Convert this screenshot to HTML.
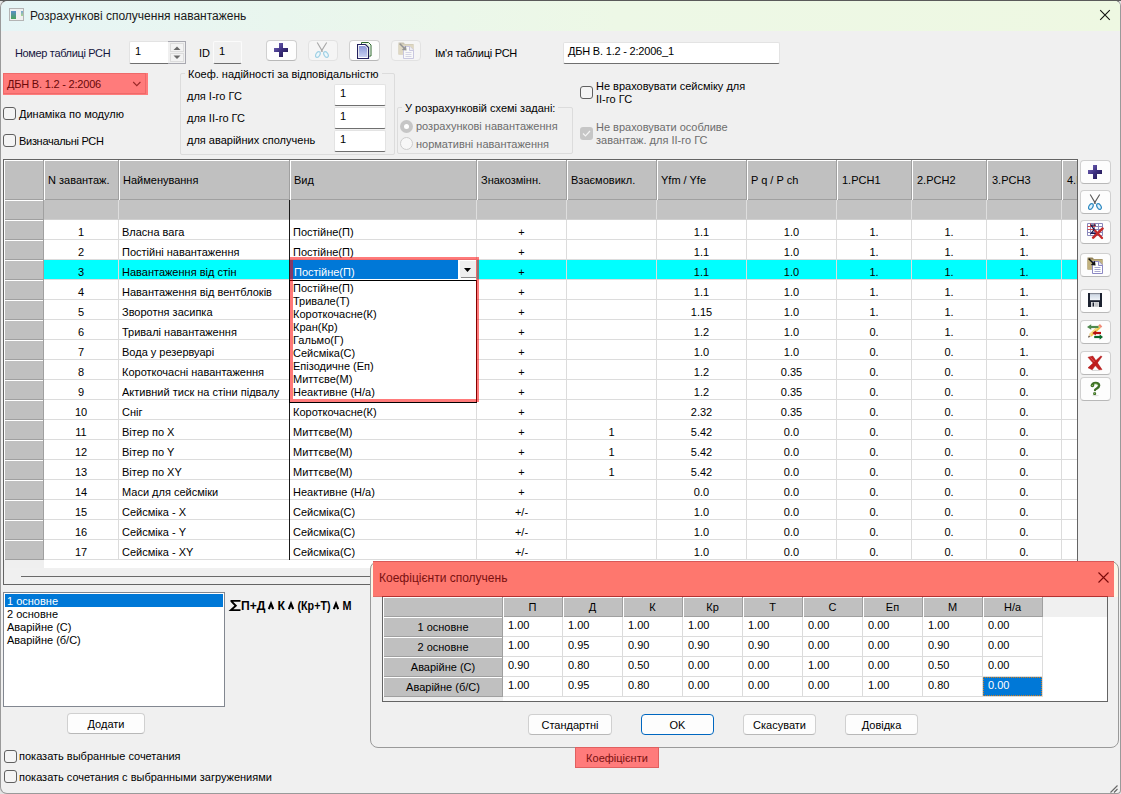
<!DOCTYPE html><html><head><meta charset="utf-8"><style>
*{margin:0;padding:0;box-sizing:border-box}
html,body{width:1121px;height:794px;overflow:hidden;background:#e4e4e4;font-family:"Liberation Sans",sans-serif}
.a{position:absolute}
.t{position:absolute;font-size:11px;line-height:13px;white-space:nowrap;color:#000}
.g{color:#6d6d6d}
.w{color:#fff}
.edit{position:absolute;background:#fff;border:1px solid #e3e3e3;border-bottom:1px solid #6f6f6f;border-radius:2px}
.btn{position:absolute;background:#fdfdfd;border:1px solid #d0d0d0;border-bottom-color:#b8b8b8;border-radius:4px}
.btnd{position:absolute;background:#f5f5f5;border:1px solid #e2e2e2;border-radius:4px}
.cb{position:absolute;width:13px;height:13px;border:1px solid #606060;border-radius:3px;background:#f4f4f4}
</style></head><body>
<svg width="0" height="0" style="position:absolute"><defs>
<linearGradient id="gp" x1="0" y1="0" x2="1" y2="1"><stop offset="0" stop-color="#7a6cc0"/><stop offset="0.5" stop-color="#3d3080"/><stop offset="1" stop-color="#1c1448"/></linearGradient>
<linearGradient id="gd" x1="0" y1="0" x2="0" y2="1"><stop offset="0" stop-color="#8a98d8"/><stop offset="1" stop-color="#c8d0f0"/></linearGradient>
<linearGradient id="gf" x1="0" y1="0" x2="0" y2="1"><stop offset="0" stop-color="#c9d4e2"/><stop offset="1" stop-color="#f0f4f8"/></linearGradient>
</defs></svg>
<div class="a" style="left:0;top:0;width:1121px;height:794px;background:#f0f0f0;border:1px solid #9a9a9a;border-top-color:#5a5a5a;border-radius:7px 6px 4px 7px;overflow:hidden">
</div>
<div class="a" style="left:0px;top:0px;width:1121px;height:1px;background:#5a5a5a"></div>
<div class="a" style="left:1px;top:1px;width:1119px;height:30px;background:linear-gradient(90deg,#e6f5f6 0%,#e9f6ee 25%,#edf8e6 55%,#eef8e2 100%);border-radius:7px 5px 0 0"></div>
<div class="a" style="left:9px;top:8px;width:15px;height:13px;border:1px solid #b4b4b4;background:#f0f0f0"></div>
<div class="a" style="left:11px;top:11px;width:5px;height:8px;background:linear-gradient(#5b8fc8,#4aa35a)"></div>
<div class="a" style="left:21px;top:11px;width:2px;height:5px;background:linear-gradient(#7aa4d4,#a8d890)"></div>
<div class="t" style="left:30px;top:9px;font-size:12px;line-height:15px;color:#1a1a1a">Розрахункові сполучення навантажень</div>
<svg class="a" style="left:1099px;top:9px" width="13" height="13"><path d="M1.2 1.2L10.8 10.8M10.8 1.2L1.2 10.8" stroke="#111" stroke-width="1.1"/></svg>
<div class="t " style="left:15px;top:47px;color:#161640;letter-spacing:-0.35px">Номер таблиці РСН</div>
<div class="edit" style="left:129px;top:41px;width:40px;height:23px;border-right:none;border-radius:2px 0 0 2px"></div>
<div class="t " style="left:135px;top:45px;">1</div>
<div class="a" style="left:168px;top:41px;width:18px;height:23px;border:1px solid #a8a8b0;border-left:none;background:#f0f0f0"></div>
<div class="a" style="left:170px;top:43px;width:14px;height:9px;border:1px solid #dcdcdc;background:#f3f3f3"></div>
<div class="a" style="left:170px;top:53px;width:14px;height:9px;border:1px solid #dcdcdc;background:#f3f3f3"></div>
<svg class="a" style="left:172px;top:45px" width="10" height="16"><path d="M1.5 5L5 1.5L8.5 5Z" fill="#6a6a6a"/><path d="M1.5 10.5L5 14L8.5 10.5Z" fill="#6a6a6a"/></svg>
<div class="t " style="left:199px;top:47px;">ID</div>
<div class="edit" style="left:213px;top:41px;width:29px;height:23px;background:#f0f0f0;border:1px solid #fbfbfb;border-bottom-color:#6f6f6f"></div>
<div class="t " style="left:219px;top:45px;">1</div>
<div class="btn" style="left:266px;top:40px;width:31px;height:21px"></div>
<svg class="a" style="left:274px;top:43px" width="14" height="14" viewBox="0 0 14 14"><path d="M5 0h4v5h5v4h-5v5h-4v-5h-5v-4h5z" fill="url(#gp)"/></svg>
<div class="btnd" style="left:308px;top:40px;width:30px;height:21px"></div>
<svg class="a" style="left:315px;top:42px" width="15" height="17" viewBox="0 0 15 17"><path d="M2.2 0.5L7.6 9.6M11.7 0.5L6.1 9.6" stroke="#a8a8a8" stroke-width="1.1" fill="none"/><ellipse cx="2.9" cy="12.5" rx="1.9" ry="3.1" transform="rotate(30 2.9 12.5)" stroke="#9fd0e4" stroke-width="1.2" fill="#eef8fc"/><ellipse cx="11" cy="12.5" rx="1.9" ry="3.1" transform="rotate(-30 11 12.5)" stroke="#9fd0e4" stroke-width="1.2" fill="#eef8fc"/></svg>
<div class="btn" style="left:349px;top:40px;width:31px;height:21px"></div>
<svg class="a" style="left:357px;top:42px" width="17" height="17" viewBox="0 0 17 17"><path d="M4.5 0.5h7l2.5 2.5v11h-9.5z" fill="#fff" stroke="#2e6a2e"/><path d="M5.5 1.5h5.5l2 2v10h-7.5z" fill="#dff5d8"/><path d="M0.5 2.5h8l3 3v11h-11z" fill="#fff" stroke="#22205e" stroke-width="1.2"/><path d="M2 4h6l2 2v9h-8z" fill="url(#gd)"/></svg>
<div class="btnd" style="left:391px;top:40px;width:30px;height:21px"></div>
<svg class="a" style="left:398px;top:42px" width="17" height="17" viewBox="0 0 17 17"><g opacity="0.42"><path d="M0.5 0.5h5l1.5 1.5h8.5v10.5h-15z" fill="#8f8058"/><path d="M0.5 2.5h15v10h-15z" fill="#c2b27e"/><path d="M5.5 4.5h6.5l3.5 3.5v8.5h-10z" fill="#fff" stroke="#8c88c4"/><path d="M11.5 4.5v4h4" fill="#e8e8f4" stroke="#8c88c4"/><path d="M7.5 10.5h6M7.5 12.5h6M7.5 14.5h6" stroke="#a8a8d0"/><path d="M1.8 1.8L7 7" stroke="#111" stroke-width="1.5"/><path d="M8.6 8.6L3.8 7.9L7.9 3.8z" fill="#111"/></g></svg>
<div class="t " style="left:435px;top:47px;letter-spacing:-0.25px">Ім'я таблиці РСН</div>
<div class="edit" style="left:563px;top:42px;width:217px;height:22px"></div>
<div class="t " style="left:568px;top:45px;letter-spacing:-0.2px">ДБН В. 1.2 - 2:2006_1</div>
<div class="a" style="left:3px;top:73px;width:145px;height:22px;background:#ff7b7b"></div>
<div class="a" style="left:3px;top:73px;width:143px;height:21px;border:1px solid #ee6a6a"></div>
<div class="t " style="left:7px;top:78px;color:#6a0808;letter-spacing:-0.2px">ДБН В. 1.2 - 2:2006</div>
<svg class="a" style="left:132px;top:80px" width="10" height="7"><path d="M1.2 2L4.8 5.6L8.4 2" stroke="#9a2828" stroke-width="1.1" fill="none"/></svg>
<div class="cb" style="left:3px;top:107px"></div>
<div class="t " style="left:19px;top:108px;">Динаміка по модулю</div>
<div class="cb" style="left:3px;top:134px"></div>
<div class="t " style="left:19px;top:135px;letter-spacing:-0.3px">Визначальні РСН</div>
<div class="a" style="left:180px;top:73px;width:215px;height:82px;border:1px solid #dcdcdc;border-radius:2px"></div>
<div class="t" style="left:185px;top:68px;padding:0 3px;background:#f0f0f0">Коеф. надійності за відповідальністю</div>
<div class="t " style="left:187px;top:90px;">для I-го ГС</div>
<div class="t " style="left:187px;top:112px;">для II-го ГС</div>
<div class="t " style="left:187px;top:134px;">для аварійних сполучень</div>
<div class="edit" style="left:334px;top:84px;width:52px;height:22px"></div>
<div class="t " style="left:340px;top:87px;">1</div>
<div class="edit" style="left:334px;top:107px;width:52px;height:22px"></div>
<div class="t " style="left:340px;top:110px;">1</div>
<div class="edit" style="left:334px;top:130px;width:52px;height:22px"></div>
<div class="t " style="left:340px;top:133px;">1</div>
<div class="a" style="left:397px;top:107px;width:176px;height:47px;border:1px solid #dcdcdc;border-radius:2px"></div>
<div class="t" style="left:402px;top:102px;padding:0 3px;background:#f0f0f0">У розрахунковій схемі задані:</div>
<div class="a" style="left:400px;top:120px;width:13px;height:13px;border-radius:50%;background:#c6c6c6"></div>
<div class="a" style="left:404px;top:124px;width:5px;height:5px;border-radius:50%;background:#fff"></div>
<div class="t g" style="left:416px;top:120px;">розрахункові навантаження</div>
<div class="a" style="left:400px;top:137px;width:13px;height:13px;border-radius:50%;border:1px solid #cdcdcd;background:#f7f7f7"></div>
<div class="t g" style="left:416px;top:138px;">нормативні навантаження</div>
<div class="cb" style="left:580px;top:86px"></div>
<div class="t " style="left:596px;top:80px;">Не враховувати сейсміку для</div>
<div class="t " style="left:596px;top:93px;">II-го ГС</div>
<div class="a" style="left:580px;top:127px;width:13px;height:13px;border-radius:3px;background:#c6c6c6"></div>
<svg class="a" style="left:582px;top:129px" width="9" height="9"><path d="M1 4.5L3.5 7L8 2" stroke="#f4f4f4" stroke-width="1.2" fill="none"/></svg>
<div class="t g" style="left:596px;top:121px;">Не враховувати особливе</div>
<div class="t g" style="left:596px;top:134px;">завантаж. для II-го ГС</div>
<div class="a" style="left:3px;top:159px;width:1075px;height:426px;border:1px solid #646464;background:#f0f0f0"></div>
<div class="a" style="left:44px;top:220px;width:1033px;height:348px;background:#fff"></div>
<div class="a" style="left:4px;top:560px;width:40px;height:8px;background:#efefef"></div>
<div class="a" style="left:4px;top:160px;width:1073px;height:40px;background:#c0c0c0"></div>
<div class="a" style="left:4px;top:200px;width:1073px;height:20px;background:#c3c3c3"></div>
<div class="a" style="left:4px;top:160px;width:1073px;height:1px;background:#fff"></div>
<div class="a" style="left:43px;top:160px;width:1px;height:40px;background:#a0a0a0"></div>
<div class="a" style="left:44px;top:160px;width:1px;height:40px;background:#fff"></div>
<div class="a" style="left:45px;top:199px;width:73px;height:1px;background:#a0a0a0"></div>
<div class="a" style="left:118px;top:160px;width:1px;height:40px;background:#a0a0a0"></div>
<div class="a" style="left:119px;top:160px;width:1px;height:40px;background:#fff"></div>
<div class="a" style="left:120px;top:199px;width:169px;height:1px;background:#a0a0a0"></div>
<div class="a" style="left:289px;top:160px;width:1px;height:40px;background:#a0a0a0"></div>
<div class="a" style="left:290px;top:160px;width:1px;height:40px;background:#fff"></div>
<div class="a" style="left:291px;top:199px;width:185px;height:1px;background:#a0a0a0"></div>
<div class="a" style="left:476px;top:160px;width:1px;height:40px;background:#a0a0a0"></div>
<div class="a" style="left:477px;top:160px;width:1px;height:40px;background:#fff"></div>
<div class="a" style="left:478px;top:199px;width:88px;height:1px;background:#a0a0a0"></div>
<div class="a" style="left:566px;top:160px;width:1px;height:40px;background:#a0a0a0"></div>
<div class="a" style="left:567px;top:160px;width:1px;height:40px;background:#fff"></div>
<div class="a" style="left:568px;top:199px;width:88px;height:1px;background:#a0a0a0"></div>
<div class="a" style="left:656px;top:160px;width:1px;height:40px;background:#a0a0a0"></div>
<div class="a" style="left:657px;top:160px;width:1px;height:40px;background:#fff"></div>
<div class="a" style="left:658px;top:199px;width:88px;height:1px;background:#a0a0a0"></div>
<div class="a" style="left:746px;top:160px;width:1px;height:40px;background:#a0a0a0"></div>
<div class="a" style="left:747px;top:160px;width:1px;height:40px;background:#fff"></div>
<div class="a" style="left:748px;top:199px;width:88px;height:1px;background:#a0a0a0"></div>
<div class="a" style="left:836px;top:160px;width:1px;height:40px;background:#a0a0a0"></div>
<div class="a" style="left:837px;top:160px;width:1px;height:40px;background:#fff"></div>
<div class="a" style="left:838px;top:199px;width:73px;height:1px;background:#a0a0a0"></div>
<div class="a" style="left:911px;top:160px;width:1px;height:40px;background:#a0a0a0"></div>
<div class="a" style="left:912px;top:160px;width:1px;height:40px;background:#fff"></div>
<div class="a" style="left:913px;top:199px;width:73px;height:1px;background:#a0a0a0"></div>
<div class="a" style="left:986px;top:160px;width:1px;height:40px;background:#a0a0a0"></div>
<div class="a" style="left:987px;top:160px;width:1px;height:40px;background:#fff"></div>
<div class="a" style="left:988px;top:199px;width:73px;height:1px;background:#a0a0a0"></div>
<div class="a" style="left:1061px;top:160px;width:1px;height:40px;background:#a0a0a0"></div>
<div class="a" style="left:1062px;top:160px;width:1px;height:40px;background:#fff"></div>
<div class="a" style="left:1063px;top:199px;width:14px;height:1px;background:#a0a0a0"></div>
<div class="a" style="left:4px;top:160px;width:1px;height:400px;background:#fff"></div>
<div class="a" style="left:5px;top:199px;width:38px;height:1px;background:#a0a0a0"></div>
<div class="a" style="left:118px;top:200px;width:1px;height:20px;background:#dedede"></div>
<div class="a" style="left:289px;top:200px;width:1px;height:20px;background:#dedede"></div>
<div class="a" style="left:476px;top:200px;width:1px;height:20px;background:#dedede"></div>
<div class="a" style="left:566px;top:200px;width:1px;height:20px;background:#dedede"></div>
<div class="a" style="left:656px;top:200px;width:1px;height:20px;background:#dedede"></div>
<div class="a" style="left:746px;top:200px;width:1px;height:20px;background:#dedede"></div>
<div class="a" style="left:836px;top:200px;width:1px;height:20px;background:#dedede"></div>
<div class="a" style="left:911px;top:200px;width:1px;height:20px;background:#dedede"></div>
<div class="a" style="left:986px;top:200px;width:1px;height:20px;background:#dedede"></div>
<div class="a" style="left:1061px;top:200px;width:1px;height:20px;background:#dedede"></div>
<div class="a" style="left:44px;top:219px;width:1033px;height:1px;background:#cfcfcf"></div>
<div class="a" style="left:5px;top:200px;width:38px;height:360px;background:#c0c0c0"></div>
<div class="a" style="left:5px;top:200px;width:38px;height:1px;background:#fff"></div>
<div class="a" style="left:5px;top:219px;width:38px;height:1px;background:#a0a0a0"></div>
<div class="a" style="left:5px;top:220px;width:38px;height:1px;background:#fff"></div>
<div class="a" style="left:5px;top:239px;width:38px;height:1px;background:#a0a0a0"></div>
<div class="a" style="left:5px;top:240px;width:38px;height:1px;background:#fff"></div>
<div class="a" style="left:5px;top:259px;width:38px;height:1px;background:#a0a0a0"></div>
<div class="a" style="left:5px;top:260px;width:38px;height:1px;background:#fff"></div>
<div class="a" style="left:5px;top:279px;width:38px;height:1px;background:#a0a0a0"></div>
<div class="a" style="left:5px;top:280px;width:38px;height:1px;background:#fff"></div>
<div class="a" style="left:5px;top:299px;width:38px;height:1px;background:#a0a0a0"></div>
<div class="a" style="left:5px;top:300px;width:38px;height:1px;background:#fff"></div>
<div class="a" style="left:5px;top:319px;width:38px;height:1px;background:#a0a0a0"></div>
<div class="a" style="left:5px;top:320px;width:38px;height:1px;background:#fff"></div>
<div class="a" style="left:5px;top:339px;width:38px;height:1px;background:#a0a0a0"></div>
<div class="a" style="left:5px;top:340px;width:38px;height:1px;background:#fff"></div>
<div class="a" style="left:5px;top:359px;width:38px;height:1px;background:#a0a0a0"></div>
<div class="a" style="left:5px;top:360px;width:38px;height:1px;background:#fff"></div>
<div class="a" style="left:5px;top:379px;width:38px;height:1px;background:#a0a0a0"></div>
<div class="a" style="left:5px;top:380px;width:38px;height:1px;background:#fff"></div>
<div class="a" style="left:5px;top:399px;width:38px;height:1px;background:#a0a0a0"></div>
<div class="a" style="left:5px;top:400px;width:38px;height:1px;background:#fff"></div>
<div class="a" style="left:5px;top:419px;width:38px;height:1px;background:#a0a0a0"></div>
<div class="a" style="left:5px;top:420px;width:38px;height:1px;background:#fff"></div>
<div class="a" style="left:5px;top:439px;width:38px;height:1px;background:#a0a0a0"></div>
<div class="a" style="left:5px;top:440px;width:38px;height:1px;background:#fff"></div>
<div class="a" style="left:5px;top:459px;width:38px;height:1px;background:#a0a0a0"></div>
<div class="a" style="left:5px;top:460px;width:38px;height:1px;background:#fff"></div>
<div class="a" style="left:5px;top:479px;width:38px;height:1px;background:#a0a0a0"></div>
<div class="a" style="left:5px;top:480px;width:38px;height:1px;background:#fff"></div>
<div class="a" style="left:5px;top:499px;width:38px;height:1px;background:#a0a0a0"></div>
<div class="a" style="left:5px;top:500px;width:38px;height:1px;background:#fff"></div>
<div class="a" style="left:5px;top:519px;width:38px;height:1px;background:#a0a0a0"></div>
<div class="a" style="left:5px;top:520px;width:38px;height:1px;background:#fff"></div>
<div class="a" style="left:5px;top:539px;width:38px;height:1px;background:#a0a0a0"></div>
<div class="a" style="left:5px;top:540px;width:38px;height:1px;background:#fff"></div>
<div class="a" style="left:5px;top:559px;width:38px;height:1px;background:#a0a0a0"></div>
<div class="a" style="left:43px;top:200px;width:1px;height:360px;background:#a0a0a0"></div>
<div class="a" style="left:44px;top:260px;width:1033px;height:19px;background:#00ffff"></div>
<div class="a" style="left:44px;top:239px;width:1033px;height:1px;background:#dcdcdc"></div>
<div class="a" style="left:44px;top:259px;width:1033px;height:1px;background:#dcdcdc"></div>
<div class="a" style="left:44px;top:279px;width:1033px;height:1px;background:#dcdcdc"></div>
<div class="a" style="left:44px;top:299px;width:1033px;height:1px;background:#dcdcdc"></div>
<div class="a" style="left:44px;top:319px;width:1033px;height:1px;background:#dcdcdc"></div>
<div class="a" style="left:44px;top:339px;width:1033px;height:1px;background:#dcdcdc"></div>
<div class="a" style="left:44px;top:359px;width:1033px;height:1px;background:#dcdcdc"></div>
<div class="a" style="left:44px;top:379px;width:1033px;height:1px;background:#dcdcdc"></div>
<div class="a" style="left:44px;top:399px;width:1033px;height:1px;background:#dcdcdc"></div>
<div class="a" style="left:44px;top:419px;width:1033px;height:1px;background:#dcdcdc"></div>
<div class="a" style="left:44px;top:439px;width:1033px;height:1px;background:#dcdcdc"></div>
<div class="a" style="left:44px;top:459px;width:1033px;height:1px;background:#dcdcdc"></div>
<div class="a" style="left:44px;top:479px;width:1033px;height:1px;background:#dcdcdc"></div>
<div class="a" style="left:44px;top:499px;width:1033px;height:1px;background:#dcdcdc"></div>
<div class="a" style="left:44px;top:519px;width:1033px;height:1px;background:#dcdcdc"></div>
<div class="a" style="left:44px;top:539px;width:1033px;height:1px;background:#dcdcdc"></div>
<div class="a" style="left:44px;top:559px;width:1033px;height:1px;background:#dcdcdc"></div>
<div class="a" style="left:118px;top:220px;width:1px;height:340px;background:#dcdcdc"></div>
<div class="a" style="left:289px;top:220px;width:1px;height:340px;background:#dcdcdc"></div>
<div class="a" style="left:476px;top:220px;width:1px;height:340px;background:#dcdcdc"></div>
<div class="a" style="left:566px;top:220px;width:1px;height:340px;background:#dcdcdc"></div>
<div class="a" style="left:656px;top:220px;width:1px;height:340px;background:#dcdcdc"></div>
<div class="a" style="left:746px;top:220px;width:1px;height:340px;background:#dcdcdc"></div>
<div class="a" style="left:836px;top:220px;width:1px;height:340px;background:#dcdcdc"></div>
<div class="a" style="left:911px;top:220px;width:1px;height:340px;background:#dcdcdc"></div>
<div class="a" style="left:986px;top:220px;width:1px;height:340px;background:#dcdcdc"></div>
<div class="a" style="left:1061px;top:220px;width:1px;height:340px;background:#dcdcdc"></div>
<div class="a" style="left:289px;top:200px;width:1px;height:360px;background:#1a1a1a"></div>
<div class="a" style="left:44px;top:160px;width:1033px;height:40px;overflow:hidden">
<div class="t" style="left:4px;top:14px">N завантаж.</div>
<div class="t" style="left:79px;top:14px">Найменування</div>
<div class="t" style="left:250px;top:14px">Вид</div>
<div class="t" style="left:437px;top:14px">Знакозмінн.</div>
<div class="t" style="left:527px;top:14px">Взаємовикл.</div>
<div class="t" style="left:617px;top:14px">Yfm / Yfe</div>
<div class="t" style="left:707px;top:14px">P q / P ch</div>
<div class="t" style="left:798px;top:14px">1.PCH1</div>
<div class="t" style="left:873px;top:14px">2.PCH2</div>
<div class="t" style="left:948px;top:14px">3.PCH3</div>
<div class="t" style="left:1023px;top:14px">4.PCH4</div>
</div>
<div class="t " style="left:44px;width:74px;text-align:center;top:226px;">1</div>
<div class="t" style="left:122px;top:226px;width:166px;overflow:hidden">Власна вага</div>
<div class="t " style="left:293px;top:226px;">Постійне(П)</div>
<div class="t " style="left:477px;width:89px;text-align:center;top:226px;">+</div>
<div class="t " style="left:657px;width:89px;text-align:center;top:226px;">1.1</div>
<div class="t " style="left:747px;width:89px;text-align:center;top:226px;">1.0</div>
<div class="t " style="left:837px;width:74px;text-align:center;top:226px;">1.</div>
<div class="t " style="left:912px;width:74px;text-align:center;top:226px;">1.</div>
<div class="t " style="left:987px;width:74px;text-align:center;top:226px;">1.</div>
<div class="t " style="left:44px;width:74px;text-align:center;top:246px;">2</div>
<div class="t" style="left:122px;top:246px;width:166px;overflow:hidden">Постійні навантаження</div>
<div class="t " style="left:293px;top:246px;">Постійне(П)</div>
<div class="t " style="left:477px;width:89px;text-align:center;top:246px;">+</div>
<div class="t " style="left:657px;width:89px;text-align:center;top:246px;">1.1</div>
<div class="t " style="left:747px;width:89px;text-align:center;top:246px;">1.0</div>
<div class="t " style="left:837px;width:74px;text-align:center;top:246px;">1.</div>
<div class="t " style="left:912px;width:74px;text-align:center;top:246px;">1.</div>
<div class="t " style="left:987px;width:74px;text-align:center;top:246px;">1.</div>
<div class="t " style="left:44px;width:74px;text-align:center;top:266px;">3</div>
<div class="t" style="left:122px;top:266px;width:166px;overflow:hidden">Навантаження від стін</div>
<div class="t " style="left:477px;width:89px;text-align:center;top:266px;">+</div>
<div class="t " style="left:657px;width:89px;text-align:center;top:266px;">1.1</div>
<div class="t " style="left:747px;width:89px;text-align:center;top:266px;">1.0</div>
<div class="t " style="left:837px;width:74px;text-align:center;top:266px;">1.</div>
<div class="t " style="left:912px;width:74px;text-align:center;top:266px;">1.</div>
<div class="t " style="left:987px;width:74px;text-align:center;top:266px;">1.</div>
<div class="t " style="left:44px;width:74px;text-align:center;top:286px;">4</div>
<div class="t" style="left:122px;top:286px;width:166px;overflow:hidden">Навантаження від вентблоків</div>
<div class="t " style="left:477px;width:89px;text-align:center;top:286px;">+</div>
<div class="t " style="left:657px;width:89px;text-align:center;top:286px;">1.1</div>
<div class="t " style="left:747px;width:89px;text-align:center;top:286px;">1.0</div>
<div class="t " style="left:837px;width:74px;text-align:center;top:286px;">1.</div>
<div class="t " style="left:912px;width:74px;text-align:center;top:286px;">1.</div>
<div class="t " style="left:987px;width:74px;text-align:center;top:286px;">1.</div>
<div class="t " style="left:44px;width:74px;text-align:center;top:306px;">5</div>
<div class="t" style="left:122px;top:306px;width:166px;overflow:hidden">Зворотня засипка</div>
<div class="t " style="left:477px;width:89px;text-align:center;top:306px;">+</div>
<div class="t " style="left:657px;width:89px;text-align:center;top:306px;">1.15</div>
<div class="t " style="left:747px;width:89px;text-align:center;top:306px;">1.0</div>
<div class="t " style="left:837px;width:74px;text-align:center;top:306px;">1.</div>
<div class="t " style="left:912px;width:74px;text-align:center;top:306px;">1.</div>
<div class="t " style="left:987px;width:74px;text-align:center;top:306px;">1.</div>
<div class="t " style="left:44px;width:74px;text-align:center;top:326px;">6</div>
<div class="t" style="left:122px;top:326px;width:166px;overflow:hidden">Тривалі навантаження</div>
<div class="t " style="left:477px;width:89px;text-align:center;top:326px;">+</div>
<div class="t " style="left:657px;width:89px;text-align:center;top:326px;">1.2</div>
<div class="t " style="left:747px;width:89px;text-align:center;top:326px;">1.0</div>
<div class="t " style="left:837px;width:74px;text-align:center;top:326px;">0.</div>
<div class="t " style="left:912px;width:74px;text-align:center;top:326px;">1.</div>
<div class="t " style="left:987px;width:74px;text-align:center;top:326px;">0.</div>
<div class="t " style="left:44px;width:74px;text-align:center;top:346px;">7</div>
<div class="t" style="left:122px;top:346px;width:166px;overflow:hidden">Вода у резервуарі</div>
<div class="t " style="left:477px;width:89px;text-align:center;top:346px;">+</div>
<div class="t " style="left:657px;width:89px;text-align:center;top:346px;">1.0</div>
<div class="t " style="left:747px;width:89px;text-align:center;top:346px;">1.0</div>
<div class="t " style="left:837px;width:74px;text-align:center;top:346px;">0.</div>
<div class="t " style="left:912px;width:74px;text-align:center;top:346px;">0.</div>
<div class="t " style="left:987px;width:74px;text-align:center;top:346px;">1.</div>
<div class="t " style="left:44px;width:74px;text-align:center;top:366px;">8</div>
<div class="t" style="left:122px;top:366px;width:166px;overflow:hidden">Короткочасні навантаження</div>
<div class="t " style="left:477px;width:89px;text-align:center;top:366px;">+</div>
<div class="t " style="left:657px;width:89px;text-align:center;top:366px;">1.2</div>
<div class="t " style="left:747px;width:89px;text-align:center;top:366px;">0.35</div>
<div class="t " style="left:837px;width:74px;text-align:center;top:366px;">0.</div>
<div class="t " style="left:912px;width:74px;text-align:center;top:366px;">0.</div>
<div class="t " style="left:987px;width:74px;text-align:center;top:366px;">0.</div>
<div class="t " style="left:44px;width:74px;text-align:center;top:386px;">9</div>
<div class="t" style="left:122px;top:386px;width:166px;overflow:hidden">Активний тиск на стіни підвалу</div>
<div class="t " style="left:477px;width:89px;text-align:center;top:386px;">+</div>
<div class="t " style="left:657px;width:89px;text-align:center;top:386px;">1.2</div>
<div class="t " style="left:747px;width:89px;text-align:center;top:386px;">0.35</div>
<div class="t " style="left:837px;width:74px;text-align:center;top:386px;">0.</div>
<div class="t " style="left:912px;width:74px;text-align:center;top:386px;">0.</div>
<div class="t " style="left:987px;width:74px;text-align:center;top:386px;">0.</div>
<div class="t " style="left:44px;width:74px;text-align:center;top:406px;">10</div>
<div class="t" style="left:122px;top:406px;width:166px;overflow:hidden">Сніг</div>
<div class="t " style="left:293px;top:406px;">Короткочасне(К)</div>
<div class="t " style="left:477px;width:89px;text-align:center;top:406px;">+</div>
<div class="t " style="left:657px;width:89px;text-align:center;top:406px;">2.32</div>
<div class="t " style="left:747px;width:89px;text-align:center;top:406px;">0.35</div>
<div class="t " style="left:837px;width:74px;text-align:center;top:406px;">0.</div>
<div class="t " style="left:912px;width:74px;text-align:center;top:406px;">0.</div>
<div class="t " style="left:987px;width:74px;text-align:center;top:406px;">0.</div>
<div class="t " style="left:44px;width:74px;text-align:center;top:426px;">11</div>
<div class="t" style="left:122px;top:426px;width:166px;overflow:hidden">Вітер по X</div>
<div class="t " style="left:293px;top:426px;">Миттєве(М)</div>
<div class="t " style="left:477px;width:89px;text-align:center;top:426px;">+</div>
<div class="t " style="left:567px;width:89px;text-align:center;top:426px;">1</div>
<div class="t " style="left:657px;width:89px;text-align:center;top:426px;">5.42</div>
<div class="t " style="left:747px;width:89px;text-align:center;top:426px;">0.0</div>
<div class="t " style="left:837px;width:74px;text-align:center;top:426px;">0.</div>
<div class="t " style="left:912px;width:74px;text-align:center;top:426px;">0.</div>
<div class="t " style="left:987px;width:74px;text-align:center;top:426px;">0.</div>
<div class="t " style="left:44px;width:74px;text-align:center;top:446px;">12</div>
<div class="t" style="left:122px;top:446px;width:166px;overflow:hidden">Вітер по Y</div>
<div class="t " style="left:293px;top:446px;">Миттєве(М)</div>
<div class="t " style="left:477px;width:89px;text-align:center;top:446px;">+</div>
<div class="t " style="left:567px;width:89px;text-align:center;top:446px;">1</div>
<div class="t " style="left:657px;width:89px;text-align:center;top:446px;">5.42</div>
<div class="t " style="left:747px;width:89px;text-align:center;top:446px;">0.0</div>
<div class="t " style="left:837px;width:74px;text-align:center;top:446px;">0.</div>
<div class="t " style="left:912px;width:74px;text-align:center;top:446px;">0.</div>
<div class="t " style="left:987px;width:74px;text-align:center;top:446px;">0.</div>
<div class="t " style="left:44px;width:74px;text-align:center;top:466px;">13</div>
<div class="t" style="left:122px;top:466px;width:166px;overflow:hidden">Вітер по XY</div>
<div class="t " style="left:293px;top:466px;">Миттєве(М)</div>
<div class="t " style="left:477px;width:89px;text-align:center;top:466px;">+</div>
<div class="t " style="left:567px;width:89px;text-align:center;top:466px;">1</div>
<div class="t " style="left:657px;width:89px;text-align:center;top:466px;">5.42</div>
<div class="t " style="left:747px;width:89px;text-align:center;top:466px;">0.0</div>
<div class="t " style="left:837px;width:74px;text-align:center;top:466px;">0.</div>
<div class="t " style="left:912px;width:74px;text-align:center;top:466px;">0.</div>
<div class="t " style="left:987px;width:74px;text-align:center;top:466px;">0.</div>
<div class="t " style="left:44px;width:74px;text-align:center;top:486px;">14</div>
<div class="t" style="left:122px;top:486px;width:166px;overflow:hidden">Маси для сейсміки</div>
<div class="t " style="left:293px;top:486px;">Неактивне (Н/а)</div>
<div class="t " style="left:477px;width:89px;text-align:center;top:486px;">+</div>
<div class="t " style="left:657px;width:89px;text-align:center;top:486px;">0.0</div>
<div class="t " style="left:747px;width:89px;text-align:center;top:486px;">0.0</div>
<div class="t " style="left:837px;width:74px;text-align:center;top:486px;">0.</div>
<div class="t " style="left:912px;width:74px;text-align:center;top:486px;">0.</div>
<div class="t " style="left:987px;width:74px;text-align:center;top:486px;">0.</div>
<div class="t " style="left:44px;width:74px;text-align:center;top:506px;">15</div>
<div class="t" style="left:122px;top:506px;width:166px;overflow:hidden">Сейсміка - X</div>
<div class="t " style="left:293px;top:506px;">Сейсміка(С)</div>
<div class="t " style="left:477px;width:89px;text-align:center;top:506px;">+/-</div>
<div class="t " style="left:657px;width:89px;text-align:center;top:506px;">1.0</div>
<div class="t " style="left:747px;width:89px;text-align:center;top:506px;">0.0</div>
<div class="t " style="left:837px;width:74px;text-align:center;top:506px;">0.</div>
<div class="t " style="left:912px;width:74px;text-align:center;top:506px;">0.</div>
<div class="t " style="left:987px;width:74px;text-align:center;top:506px;">0.</div>
<div class="t " style="left:44px;width:74px;text-align:center;top:526px;">16</div>
<div class="t" style="left:122px;top:526px;width:166px;overflow:hidden">Сейсміка - Y</div>
<div class="t " style="left:293px;top:526px;">Сейсміка(С)</div>
<div class="t " style="left:477px;width:89px;text-align:center;top:526px;">+/-</div>
<div class="t " style="left:657px;width:89px;text-align:center;top:526px;">1.0</div>
<div class="t " style="left:747px;width:89px;text-align:center;top:526px;">0.0</div>
<div class="t " style="left:837px;width:74px;text-align:center;top:526px;">0.</div>
<div class="t " style="left:912px;width:74px;text-align:center;top:526px;">0.</div>
<div class="t " style="left:987px;width:74px;text-align:center;top:526px;">0.</div>
<div class="t " style="left:44px;width:74px;text-align:center;top:546px;">17</div>
<div class="t" style="left:122px;top:546px;width:166px;overflow:hidden">Сейсміка - XY</div>
<div class="t " style="left:293px;top:546px;">Сейсміка(С)</div>
<div class="t " style="left:477px;width:89px;text-align:center;top:546px;">+/-</div>
<div class="t " style="left:657px;width:89px;text-align:center;top:546px;">1.0</div>
<div class="t " style="left:747px;width:89px;text-align:center;top:546px;">0.0</div>
<div class="t " style="left:837px;width:74px;text-align:center;top:546px;">0.</div>
<div class="t " style="left:912px;width:74px;text-align:center;top:546px;">0.</div>
<div class="t " style="left:987px;width:74px;text-align:center;top:546px;">0.</div>
<div class="a" style="left:290px;top:260px;width:168px;height:19px;background:#0078d7"></div>
<div class="a" style="left:458px;top:260px;width:18px;height:19px;background:#fff"></div>
<div class="a" style="left:460px;top:261px;width:16px;height:17px;background:#efefef"></div>
<div class="a" style="left:461px;top:277px;width:15px;height:1px;background:#8a8a8a"></div>
<svg class="a" style="left:464px;top:268px" width="7" height="4"><path d="M0 0h7L3.5 4z" fill="#000"/></svg>
<div class="t w" style="left:294px;top:266px;">Постійне(П)</div>
<div class="a" style="left:290px;top:279px;width:187px;height:1px;background:#fff"></div>
<div class="a" style="left:289px;top:280px;width:188px;height:123px;background:#fff;border:1px solid #000"></div>
<div class="t " style="left:293px;top:282px;">Постійне(П)</div>
<div class="t " style="left:293px;top:295px;">Тривале(Т)</div>
<div class="t " style="left:293px;top:308px;">Короткочасне(К)</div>
<div class="t " style="left:293px;top:321px;">Кран(Кр)</div>
<div class="t " style="left:293px;top:334px;">Гальмо(Г)</div>
<div class="t " style="left:293px;top:347px;">Сейсміка(С)</div>
<div class="t " style="left:293px;top:360px;">Епізодичне (Еп)</div>
<div class="t " style="left:293px;top:373px;">Миттєве(М)</div>
<div class="t " style="left:293px;top:386px;">Неактивне (Н/а)</div>
<div class="a" style="left:290px;top:257px;width:189px;height:145px;border:3.5px solid rgba(255,0,0,0.52)"></div>
<div class="a" style="left:4px;top:568px;width:1073px;height:16px;background:#f0f0f0"></div>
<div class="a" style="left:21px;top:576px;width:1040px;height:1px;background:#6a6a6a"></div>
<div class="btn" style="left:1080px;top:160px;width:31px;height:24px"></div>
<div class="btn" style="left:1080px;top:190px;width:31px;height:24px"></div>
<div class="btn" style="left:1080px;top:220px;width:31px;height:24px"></div>
<div class="btn" style="left:1080px;top:253px;width:31px;height:24px"></div>
<div class="btn" style="left:1080px;top:289px;width:31px;height:24px"></div>
<div class="btn" style="left:1080px;top:320px;width:31px;height:24px"></div>
<div class="btn" style="left:1080px;top:351px;width:31px;height:24px"></div>
<div class="btn" style="left:1080px;top:377px;width:31px;height:24px"></div>
<svg class="a" style="left:1088px;top:165px" width="14" height="14" viewBox="0 0 14 14"><path d="M5 0h4v5h5v4h-5v5h-4v-5h-5v-4h5z" fill="url(#gp)"/></svg>
<svg class="a" style="left:1088px;top:194px" width="15" height="17" viewBox="0 0 15 17"><path d="M2.2 0.5L7.6 9.6M11.7 0.5L6.1 9.6" stroke="#5a5a5a" stroke-width="1.1" fill="none"/><ellipse cx="2.9" cy="12.5" rx="1.9" ry="3.1" transform="rotate(30 2.9 12.5)" stroke="#2a88c0" stroke-width="1.2" fill="#e4f2fa"/><ellipse cx="11" cy="12.5" rx="1.9" ry="3.1" transform="rotate(-30 11 12.5)" stroke="#2a88c0" stroke-width="1.2" fill="#e4f2fa"/></svg>
<svg class="a" style="left:1086px;top:222px" width="18" height="18" viewBox="0 0 18 18"><path d="M1.5 1.5h15v12h-15z" fill="#fff"/><path d="M1.5 1.5h15v12h-15zM1.5 4.5h15M1.5 7.5h15M1.5 10.5h15M4.5 1.5v12M8.5 1.5v12M12.5 1.5v12" stroke="#8a88bc" stroke-width="1" fill="none"/><path d="M1.5 4.5h8M1.5 7.5h8M4.5 1.5v3M8.5 1.5v3" stroke="#d04848" stroke-width="1"/><path d="M4.5 3.2H10M5 3.2L8.2 7.6L5.2 11.4H10.5" stroke="#1c1a50" stroke-width="1.3" fill="none"/><path d="M7.2 15.6L16.5 6.6" stroke="#c42a2a" stroke-width="2.6" stroke-linecap="round"/><path d="M9.2 8.8L16 16" stroke="#c42a2a" stroke-width="2.3" stroke-linecap="round"/></svg>
<svg class="a" style="left:1087px;top:257px" width="17" height="17" viewBox="0 0 17 17"><g ><path d="M0.5 0.5h5l1.5 1.5h8.5v10.5h-15z" fill="#8f8058"/><path d="M0.5 2.5h15v10h-15z" fill="#c2b27e"/><path d="M5.5 4.5h6.5l3.5 3.5v8.5h-10z" fill="#fff" stroke="#8c88c4"/><path d="M11.5 4.5v4h4" fill="#e8e8f4" stroke="#8c88c4"/><path d="M7.5 10.5h6M7.5 12.5h6M7.5 14.5h6" stroke="#a8a8d0"/><path d="M1.8 1.8L7 7" stroke="#111" stroke-width="1.5"/><path d="M8.6 8.6L3.8 7.9L7.9 3.8z" fill="#111"/></g></svg>
<svg class="a" style="left:1088px;top:293px" width="14" height="14" viewBox="0 0 14 14"><path d="M0 0h14v14h-14z" fill="#1c2230"/><path d="M2 0.6h10v6.6h-10z" fill="url(#gf)"/><path d="M2 0.6h10v0.8h-10z" fill="#b8bcc4"/><path d="M3 9h8v5h-8z" fill="#d8dadc"/><path d="M4.6 9.6h1.4v3.8h-1.4z" fill="#1c2230"/><path d="M7 9.5h3v4h-3z" fill="#c4c6c8"/></svg>
<svg class="a" style="left:1085px;top:323px" width="20" height="20" viewBox="0 0 20 20"><path d="M4.33 11.06L13.33 2.56L15.67 5.04L6.67 13.54z" fill="#f2c84a"/><path d="M4.33 11.06L13.33 2.56L14.5 3.8L5.5 12.3z" fill="#f8e08a"/><path d="M3.2 14.5L4.33 11.06L6.67 13.54z" fill="#e8c8a0"/><path d="M3.2 14.5L3.8 12.7L5 13.9z" fill="#222"/><path d="M13.33 2.56L14.93 1.06L17.27 3.54L15.67 5.04z" fill="#f08a78"/><path d="M5.5 4H13.5" stroke="#4f8a4f" stroke-width="2.2"/><path d="M2 4L6.2 1.2V6.8z" fill="#4f8a4f"/><path d="M10 10H16" stroke="#b81010" stroke-width="2.2"/><path d="M7.3 10L10.8 7.4V12.6z" fill="#b81010"/><path d="M9.2 14H15.5" stroke="#0a6a2a" stroke-width="2.2"/><path d="M18 14L14.6 11.3V16.7z" fill="#0a6a2a"/></svg>
<svg class="a" style="left:1084px;top:352px" width="22" height="22" viewBox="0 0 22 22"><ellipse cx="11.5" cy="18.4" rx="4" ry="0.7" fill="#d8d8d8"/><path d="M4 5.3L8.8 4.1L18 17.6L15 17.8z" fill="#c42020" stroke="#a81515" stroke-width="0.5"/><path d="M16.8 4L18 4.6L8.2 17.8L4 15.8z" fill="#c01c1c" stroke="#a81515" stroke-width="0.5"/><path d="M6.5 5.5L10.5 10" stroke="#e06060" stroke-width="0.8"/></svg>
<svg class="a" style="left:1084px;top:378px" width="22" height="22" viewBox="0 0 22 22"><ellipse cx="11.5" cy="17.6" rx="3.5" ry="0.6" fill="#dcdcdc"/><path d="M8.2 7.6C8.2 4.3 15.2 3.8 15.2 7.6C15.2 10.2 11.4 10.4 11 12.1" stroke="#3d6e26" stroke-width="2.3" fill="none" stroke-linecap="round"/><path d="M9.5 6.5C10.5 5.2 13.8 5.3 14 7.6" stroke="#78b050" stroke-width="0.8" fill="none"/><circle cx="8.4" cy="7.4" r="1.8" fill="#3d6e26"/><circle cx="8.4" cy="7.4" r="0.7" fill="#8cc060"/><rect x="9.2" y="14.3" width="2.9" height="2.8" rx="0.8" fill="#3d6e26"/><circle cx="10.6" cy="15.5" r="0.6" fill="#8cc060"/></svg>
<div class="a" style="left:3px;top:592px;width:222px;height:115px;background:#fff;border:1px solid #828790"></div>
<div class="a" style="left:5px;top:594px;width:218px;height:13px;background:#0078d7"></div>
<div class="t w" style="left:7px;top:595px;">1 основне</div>
<div class="t " style="left:7px;top:608px;">2 основне</div>
<div class="t " style="left:7px;top:621px;">Аварійне (С)</div>
<div class="t " style="left:7px;top:634px;">Аварійне (б/С)</div>
<svg class="a" style="left:226px;top:596px" width="130" height="18" viewBox="226 596 130 18" font-family="Liberation Sans" font-weight="bold" font-size="12.5"><path d="M230.5 600.9H240.5M231 600.9L235.8 605.8L231 610.1H240.5" stroke="#000" stroke-width="1.9" fill="none"/><text x="241" y="610" textLength="24.5" lengthAdjust="spacingAndGlyphs">П+Д</text><path d="M268.8 609.2L271 603.6L273.2 609.2" stroke="#000" stroke-width="2.1" fill="none"/><text x="277.5" y="610" textLength="7.5" lengthAdjust="spacingAndGlyphs">К</text><path d="M288.8 609.2L291 603.6L293.2 609.2" stroke="#000" stroke-width="2.1" fill="none"/><text x="297.5" y="610" textLength="33" lengthAdjust="spacingAndGlyphs">(Кр+Т)</text><path d="M333.8 609.2L336 603.6L338.2 609.2" stroke="#000" stroke-width="2.1" fill="none"/><text x="342.5" y="610" textLength="9" lengthAdjust="spacingAndGlyphs">М</text></svg>
<div class="btn" style="left:67px;top:713px;width:78px;height:21px"></div>
<div class="t " style="left:67px;width:78px;text-align:center;top:718px;">Додати</div>
<div class="cb" style="left:4px;top:750px"></div>
<div class="t " style="left:19px;top:750px;">показать выбранные сочетания</div>
<div class="cb" style="left:4px;top:770px"></div>
<div class="t " style="left:19px;top:771px;">показать сочетания с выбранными загружениями</div>
<svg class="a" style="left:1109px;top:784px" width="10" height="10"><path d="M1.5 8.5L8.5 1.5M5 8.5L8.5 5" stroke="#666" stroke-width="1.1"/></svg>
<div class="a" style="left:370px;top:561px;width:749px;height:187px;background:#f0f0f0;border-radius:8px"></div>
<div class="a" style="left:370px;top:561px;width:749px;height:36px;background:#fcf7e8;border-radius:8px 8px 0 0"></div>
<div class="a" style="left:370px;top:561px;width:749px;height:187px;border:1px solid #9a9a9a;border-radius:8px"></div>
<div class="a" style="left:373px;top:561px;width:741px;height:36px;background:#fe776e;border-top:1px solid #d85858;border-bottom:1px solid #e06a62"></div>
<div class="t" style="left:379px;top:571px;font-size:12px;line-height:15px;color:#7a1010">Коефіцієнти сполучень</div>
<svg class="a" style="left:1097px;top:571px" width="13" height="13"><path d="M1.5 1.5L11.5 11.5M11.5 1.5L1.5 11.5" stroke="#7a0a0a" stroke-width="1.1"/></svg>
<div class="a" style="left:382px;top:596px;width:726px;height:106px;border:1px solid #646464;background:#fff"></div>
<div class="a" style="left:383px;top:597px;width:724px;height:20px;background:#f0f0f0"></div>
<div class="a" style="left:383px;top:697px;width:120px;height:4px;background:#f0f0f0"></div>
<div class="a" style="left:383px;top:597px;width:119px;height:20px;background:#c0c0c0"></div>
<div class="a" style="left:383px;top:597px;width:119px;height:1px;background:#fff"></div>
<div class="a" style="left:383px;top:597px;width:1px;height:100px;background:#fff"></div>
<div class="a" style="left:384px;top:616px;width:118px;height:1px;background:#a0a0a0"></div>
<div class="a" style="left:502px;top:597px;width:1px;height:100px;background:#a0a0a0"></div>
<div class="a" style="left:503px;top:597px;width:59px;height:20px;background:#c0c0c0"></div>
<div class="a" style="left:503px;top:597px;width:59px;height:1px;background:#fff"></div>
<div class="a" style="left:503px;top:597px;width:1px;height:20px;background:#fff"></div>
<div class="a" style="left:562px;top:597px;width:1px;height:20px;background:#a0a0a0"></div>
<div class="a" style="left:504px;top:616px;width:58px;height:1px;background:#a0a0a0"></div>
<div class="a" style="left:563px;top:597px;width:59px;height:20px;background:#c0c0c0"></div>
<div class="a" style="left:563px;top:597px;width:59px;height:1px;background:#fff"></div>
<div class="a" style="left:563px;top:597px;width:1px;height:20px;background:#fff"></div>
<div class="a" style="left:622px;top:597px;width:1px;height:20px;background:#a0a0a0"></div>
<div class="a" style="left:564px;top:616px;width:58px;height:1px;background:#a0a0a0"></div>
<div class="a" style="left:623px;top:597px;width:59px;height:20px;background:#c0c0c0"></div>
<div class="a" style="left:623px;top:597px;width:59px;height:1px;background:#fff"></div>
<div class="a" style="left:623px;top:597px;width:1px;height:20px;background:#fff"></div>
<div class="a" style="left:682px;top:597px;width:1px;height:20px;background:#a0a0a0"></div>
<div class="a" style="left:624px;top:616px;width:58px;height:1px;background:#a0a0a0"></div>
<div class="a" style="left:683px;top:597px;width:59px;height:20px;background:#c0c0c0"></div>
<div class="a" style="left:683px;top:597px;width:59px;height:1px;background:#fff"></div>
<div class="a" style="left:683px;top:597px;width:1px;height:20px;background:#fff"></div>
<div class="a" style="left:742px;top:597px;width:1px;height:20px;background:#a0a0a0"></div>
<div class="a" style="left:684px;top:616px;width:58px;height:1px;background:#a0a0a0"></div>
<div class="a" style="left:743px;top:597px;width:59px;height:20px;background:#c0c0c0"></div>
<div class="a" style="left:743px;top:597px;width:59px;height:1px;background:#fff"></div>
<div class="a" style="left:743px;top:597px;width:1px;height:20px;background:#fff"></div>
<div class="a" style="left:802px;top:597px;width:1px;height:20px;background:#a0a0a0"></div>
<div class="a" style="left:744px;top:616px;width:58px;height:1px;background:#a0a0a0"></div>
<div class="a" style="left:803px;top:597px;width:59px;height:20px;background:#c0c0c0"></div>
<div class="a" style="left:803px;top:597px;width:59px;height:1px;background:#fff"></div>
<div class="a" style="left:803px;top:597px;width:1px;height:20px;background:#fff"></div>
<div class="a" style="left:862px;top:597px;width:1px;height:20px;background:#a0a0a0"></div>
<div class="a" style="left:804px;top:616px;width:58px;height:1px;background:#a0a0a0"></div>
<div class="a" style="left:863px;top:597px;width:59px;height:20px;background:#c0c0c0"></div>
<div class="a" style="left:863px;top:597px;width:59px;height:1px;background:#fff"></div>
<div class="a" style="left:863px;top:597px;width:1px;height:20px;background:#fff"></div>
<div class="a" style="left:922px;top:597px;width:1px;height:20px;background:#a0a0a0"></div>
<div class="a" style="left:864px;top:616px;width:58px;height:1px;background:#a0a0a0"></div>
<div class="a" style="left:923px;top:597px;width:59px;height:20px;background:#c0c0c0"></div>
<div class="a" style="left:923px;top:597px;width:59px;height:1px;background:#fff"></div>
<div class="a" style="left:923px;top:597px;width:1px;height:20px;background:#fff"></div>
<div class="a" style="left:982px;top:597px;width:1px;height:20px;background:#a0a0a0"></div>
<div class="a" style="left:924px;top:616px;width:58px;height:1px;background:#a0a0a0"></div>
<div class="a" style="left:983px;top:597px;width:59px;height:20px;background:#c0c0c0"></div>
<div class="a" style="left:983px;top:597px;width:59px;height:1px;background:#fff"></div>
<div class="a" style="left:983px;top:597px;width:1px;height:20px;background:#fff"></div>
<div class="a" style="left:1042px;top:597px;width:1px;height:20px;background:#a0a0a0"></div>
<div class="a" style="left:984px;top:616px;width:58px;height:1px;background:#a0a0a0"></div>
<div class="t " style="left:503px;width:59px;text-align:center;top:601px;">П</div>
<div class="t " style="left:563px;width:59px;text-align:center;top:601px;">Д</div>
<div class="t " style="left:623px;width:59px;text-align:center;top:601px;">К</div>
<div class="t " style="left:683px;width:59px;text-align:center;top:601px;">Кр</div>
<div class="t " style="left:743px;width:59px;text-align:center;top:601px;">Т</div>
<div class="t " style="left:803px;width:59px;text-align:center;top:601px;">С</div>
<div class="t " style="left:863px;width:59px;text-align:center;top:601px;">Еп</div>
<div class="t " style="left:923px;width:59px;text-align:center;top:601px;">М</div>
<div class="t " style="left:983px;width:59px;text-align:center;top:601px;">Н/а</div>
<div class="a" style="left:384px;top:617px;width:118px;height:19px;background:#c0c0c0"></div>
<div class="a" style="left:384px;top:617px;width:118px;height:1px;background:#fff"></div>
<div class="a" style="left:384px;top:636px;width:118px;height:1px;background:#a0a0a0"></div>
<div class="t " style="left:384px;width:118px;text-align:center;top:621px;">1 основне</div>
<div class="a" style="left:562px;top:617px;width:1px;height:20px;background:#dcdcdc"></div>
<div class="a" style="left:503px;top:636px;width:60px;height:1px;background:#dcdcdc"></div>
<div class="t " style="left:508px;top:619px;">1.00</div>
<div class="a" style="left:622px;top:617px;width:1px;height:20px;background:#dcdcdc"></div>
<div class="a" style="left:563px;top:636px;width:60px;height:1px;background:#dcdcdc"></div>
<div class="t " style="left:568px;top:619px;">1.00</div>
<div class="a" style="left:682px;top:617px;width:1px;height:20px;background:#dcdcdc"></div>
<div class="a" style="left:623px;top:636px;width:60px;height:1px;background:#dcdcdc"></div>
<div class="t " style="left:628px;top:619px;">1.00</div>
<div class="a" style="left:742px;top:617px;width:1px;height:20px;background:#dcdcdc"></div>
<div class="a" style="left:683px;top:636px;width:60px;height:1px;background:#dcdcdc"></div>
<div class="t " style="left:688px;top:619px;">1.00</div>
<div class="a" style="left:802px;top:617px;width:1px;height:20px;background:#dcdcdc"></div>
<div class="a" style="left:743px;top:636px;width:60px;height:1px;background:#dcdcdc"></div>
<div class="t " style="left:748px;top:619px;">1.00</div>
<div class="a" style="left:862px;top:617px;width:1px;height:20px;background:#dcdcdc"></div>
<div class="a" style="left:803px;top:636px;width:60px;height:1px;background:#dcdcdc"></div>
<div class="t " style="left:808px;top:619px;">0.00</div>
<div class="a" style="left:922px;top:617px;width:1px;height:20px;background:#dcdcdc"></div>
<div class="a" style="left:863px;top:636px;width:60px;height:1px;background:#dcdcdc"></div>
<div class="t " style="left:868px;top:619px;">0.00</div>
<div class="a" style="left:982px;top:617px;width:1px;height:20px;background:#dcdcdc"></div>
<div class="a" style="left:923px;top:636px;width:60px;height:1px;background:#dcdcdc"></div>
<div class="t " style="left:928px;top:619px;">1.00</div>
<div class="a" style="left:1042px;top:617px;width:1px;height:20px;background:#dcdcdc"></div>
<div class="a" style="left:983px;top:636px;width:60px;height:1px;background:#dcdcdc"></div>
<div class="t " style="left:988px;top:619px;">0.00</div>
<div class="a" style="left:384px;top:637px;width:118px;height:19px;background:#c0c0c0"></div>
<div class="a" style="left:384px;top:637px;width:118px;height:1px;background:#fff"></div>
<div class="a" style="left:384px;top:656px;width:118px;height:1px;background:#a0a0a0"></div>
<div class="t " style="left:384px;width:118px;text-align:center;top:641px;">2 основне</div>
<div class="a" style="left:562px;top:637px;width:1px;height:20px;background:#dcdcdc"></div>
<div class="a" style="left:503px;top:656px;width:60px;height:1px;background:#dcdcdc"></div>
<div class="t " style="left:508px;top:639px;">1.00</div>
<div class="a" style="left:622px;top:637px;width:1px;height:20px;background:#dcdcdc"></div>
<div class="a" style="left:563px;top:656px;width:60px;height:1px;background:#dcdcdc"></div>
<div class="t " style="left:568px;top:639px;">0.95</div>
<div class="a" style="left:682px;top:637px;width:1px;height:20px;background:#dcdcdc"></div>
<div class="a" style="left:623px;top:656px;width:60px;height:1px;background:#dcdcdc"></div>
<div class="t " style="left:628px;top:639px;">0.90</div>
<div class="a" style="left:742px;top:637px;width:1px;height:20px;background:#dcdcdc"></div>
<div class="a" style="left:683px;top:656px;width:60px;height:1px;background:#dcdcdc"></div>
<div class="t " style="left:688px;top:639px;">0.90</div>
<div class="a" style="left:802px;top:637px;width:1px;height:20px;background:#dcdcdc"></div>
<div class="a" style="left:743px;top:656px;width:60px;height:1px;background:#dcdcdc"></div>
<div class="t " style="left:748px;top:639px;">0.90</div>
<div class="a" style="left:862px;top:637px;width:1px;height:20px;background:#dcdcdc"></div>
<div class="a" style="left:803px;top:656px;width:60px;height:1px;background:#dcdcdc"></div>
<div class="t " style="left:808px;top:639px;">0.00</div>
<div class="a" style="left:922px;top:637px;width:1px;height:20px;background:#dcdcdc"></div>
<div class="a" style="left:863px;top:656px;width:60px;height:1px;background:#dcdcdc"></div>
<div class="t " style="left:868px;top:639px;">0.00</div>
<div class="a" style="left:982px;top:637px;width:1px;height:20px;background:#dcdcdc"></div>
<div class="a" style="left:923px;top:656px;width:60px;height:1px;background:#dcdcdc"></div>
<div class="t " style="left:928px;top:639px;">0.90</div>
<div class="a" style="left:1042px;top:637px;width:1px;height:20px;background:#dcdcdc"></div>
<div class="a" style="left:983px;top:656px;width:60px;height:1px;background:#dcdcdc"></div>
<div class="t " style="left:988px;top:639px;">0.00</div>
<div class="a" style="left:384px;top:657px;width:118px;height:19px;background:#c0c0c0"></div>
<div class="a" style="left:384px;top:657px;width:118px;height:1px;background:#fff"></div>
<div class="a" style="left:384px;top:676px;width:118px;height:1px;background:#a0a0a0"></div>
<div class="t " style="left:384px;width:118px;text-align:center;top:661px;">Аварійне (С)</div>
<div class="a" style="left:562px;top:657px;width:1px;height:20px;background:#dcdcdc"></div>
<div class="a" style="left:503px;top:676px;width:60px;height:1px;background:#dcdcdc"></div>
<div class="t " style="left:508px;top:659px;">0.90</div>
<div class="a" style="left:622px;top:657px;width:1px;height:20px;background:#dcdcdc"></div>
<div class="a" style="left:563px;top:676px;width:60px;height:1px;background:#dcdcdc"></div>
<div class="t " style="left:568px;top:659px;">0.80</div>
<div class="a" style="left:682px;top:657px;width:1px;height:20px;background:#dcdcdc"></div>
<div class="a" style="left:623px;top:676px;width:60px;height:1px;background:#dcdcdc"></div>
<div class="t " style="left:628px;top:659px;">0.50</div>
<div class="a" style="left:742px;top:657px;width:1px;height:20px;background:#dcdcdc"></div>
<div class="a" style="left:683px;top:676px;width:60px;height:1px;background:#dcdcdc"></div>
<div class="t " style="left:688px;top:659px;">0.00</div>
<div class="a" style="left:802px;top:657px;width:1px;height:20px;background:#dcdcdc"></div>
<div class="a" style="left:743px;top:676px;width:60px;height:1px;background:#dcdcdc"></div>
<div class="t " style="left:748px;top:659px;">0.00</div>
<div class="a" style="left:862px;top:657px;width:1px;height:20px;background:#dcdcdc"></div>
<div class="a" style="left:803px;top:676px;width:60px;height:1px;background:#dcdcdc"></div>
<div class="t " style="left:808px;top:659px;">1.00</div>
<div class="a" style="left:922px;top:657px;width:1px;height:20px;background:#dcdcdc"></div>
<div class="a" style="left:863px;top:676px;width:60px;height:1px;background:#dcdcdc"></div>
<div class="t " style="left:868px;top:659px;">0.00</div>
<div class="a" style="left:982px;top:657px;width:1px;height:20px;background:#dcdcdc"></div>
<div class="a" style="left:923px;top:676px;width:60px;height:1px;background:#dcdcdc"></div>
<div class="t " style="left:928px;top:659px;">0.50</div>
<div class="a" style="left:1042px;top:657px;width:1px;height:20px;background:#dcdcdc"></div>
<div class="a" style="left:983px;top:676px;width:60px;height:1px;background:#dcdcdc"></div>
<div class="t " style="left:988px;top:659px;">0.00</div>
<div class="a" style="left:384px;top:677px;width:118px;height:19px;background:#c0c0c0"></div>
<div class="a" style="left:384px;top:677px;width:118px;height:1px;background:#fff"></div>
<div class="a" style="left:384px;top:696px;width:118px;height:1px;background:#a0a0a0"></div>
<div class="t " style="left:384px;width:118px;text-align:center;top:681px;">Аварійне (б/С)</div>
<div class="a" style="left:562px;top:677px;width:1px;height:20px;background:#dcdcdc"></div>
<div class="a" style="left:503px;top:696px;width:60px;height:1px;background:#dcdcdc"></div>
<div class="t " style="left:508px;top:679px;">1.00</div>
<div class="a" style="left:622px;top:677px;width:1px;height:20px;background:#dcdcdc"></div>
<div class="a" style="left:563px;top:696px;width:60px;height:1px;background:#dcdcdc"></div>
<div class="t " style="left:568px;top:679px;">0.95</div>
<div class="a" style="left:682px;top:677px;width:1px;height:20px;background:#dcdcdc"></div>
<div class="a" style="left:623px;top:696px;width:60px;height:1px;background:#dcdcdc"></div>
<div class="t " style="left:628px;top:679px;">0.80</div>
<div class="a" style="left:742px;top:677px;width:1px;height:20px;background:#dcdcdc"></div>
<div class="a" style="left:683px;top:696px;width:60px;height:1px;background:#dcdcdc"></div>
<div class="t " style="left:688px;top:679px;">0.00</div>
<div class="a" style="left:802px;top:677px;width:1px;height:20px;background:#dcdcdc"></div>
<div class="a" style="left:743px;top:696px;width:60px;height:1px;background:#dcdcdc"></div>
<div class="t " style="left:748px;top:679px;">0.00</div>
<div class="a" style="left:862px;top:677px;width:1px;height:20px;background:#dcdcdc"></div>
<div class="a" style="left:803px;top:696px;width:60px;height:1px;background:#dcdcdc"></div>
<div class="t " style="left:808px;top:679px;">0.00</div>
<div class="a" style="left:922px;top:677px;width:1px;height:20px;background:#dcdcdc"></div>
<div class="a" style="left:863px;top:696px;width:60px;height:1px;background:#dcdcdc"></div>
<div class="t " style="left:868px;top:679px;">1.00</div>
<div class="a" style="left:982px;top:677px;width:1px;height:20px;background:#dcdcdc"></div>
<div class="a" style="left:923px;top:696px;width:60px;height:1px;background:#dcdcdc"></div>
<div class="t " style="left:928px;top:679px;">0.80</div>
<div class="a" style="left:1042px;top:677px;width:1px;height:20px;background:#dcdcdc"></div>
<div class="a" style="left:983px;top:696px;width:60px;height:1px;background:#dcdcdc"></div>
<div class="a" style="left:983px;top:677px;width:59px;height:19px;background:#0078d7;outline:1px dotted #d08020;outline-offset:-1px"></div>
<div class="t w" style="left:988px;top:679px;">0.00</div>
<div class="a" style="left:382px;top:596px;width:726px;height:1px;background:#b43030"></div>
<div class="btn" style="left:528px;top:714px;width:84px;height:21px;"></div>
<div class="t " style="left:528px;width:84px;text-align:center;top:719px;">Стандартні</div>
<div class="btn" style="left:641px;top:714px;width:73px;height:21px;border-color:#0067c0;"></div>
<div class="t " style="left:641px;width:73px;text-align:center;top:719px;">OK</div>
<div class="btn" style="left:743px;top:714px;width:73px;height:21px;"></div>
<div class="t " style="left:743px;width:73px;text-align:center;top:719px;">Скасувати</div>
<div class="btn" style="left:845px;top:714px;width:73px;height:21px;"></div>
<div class="t " style="left:845px;width:73px;text-align:center;top:719px;">Довідка</div>
<div class="a" style="left:575px;top:747px;width:84px;height:21px;background:#ff7b7b;border:1px solid #e06060"></div>
<div class="t " style="left:575px;width:84px;text-align:center;top:752px;color:#7a1010">Коефіцієнти</div>
</body></html>
